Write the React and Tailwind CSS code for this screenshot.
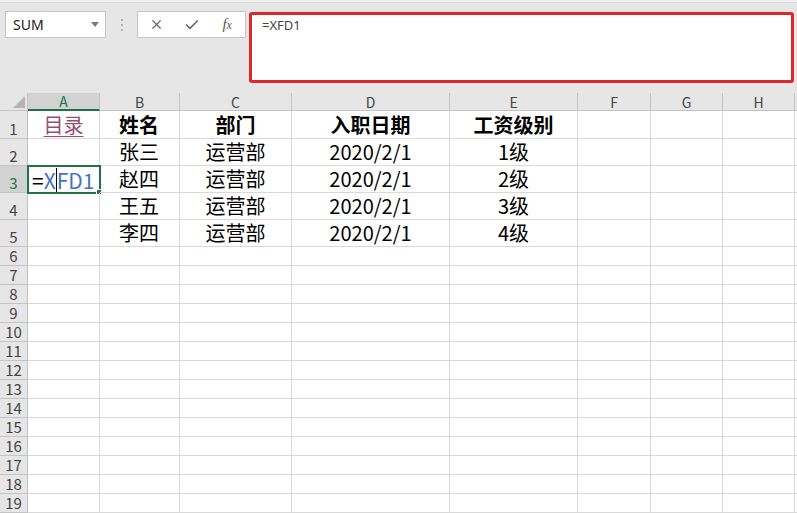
import React from "react";
import { X, Check } from "lucide-react";

const colLetters = ["A", "B", "C", "D", "E", "F", "G", "H"];

const rows = [
  { n: 1, h: "h-[28px]", cells: ["目录", "姓名", "部门", "入职日期", "工资级别"], bold: true },
  { n: 2, h: "h-[27px]", cells: ["", "张三", "运营部", "2020/2/1", "1级"] },
  { n: 3, h: "h-[27px]", cells: ["", "赵四", "运营部", "2020/2/1", "2级"] },
  { n: 4, h: "h-[27px]", cells: ["", "王五", "运营部", "2020/2/1", "3级"] },
  { n: 5, h: "h-[27px]", cells: ["", "李四", "运营部", "2020/2/1", "4级"] },
];
for (let i = 6; i <= 19; i++) rows.push({ n: i, h: "h-[19px]", cells: [] });

const gridCols =
  "grid grid-cols-[28px_72px_80px_112px_158px_128px_73px_72px_72px_1fr]";

function Cell({ row, ci }) {
  const txt = row.cells[ci] || "";
  const isA1 = row.n === 1 && ci === 0;
  const isA3 = row.n === 3 && ci === 0;
  const isB = ci === 1;
  return (
    <div
      className={`relative border-r border-b border-[#d9d9d9] flex items-end pb-[1px] ${
        isB ? "justify-start pl-[19px]" : "justify-center"
      }`}
    >
      {isA1 ? (
        <span className="text-[20px] leading-[24px] text-[#954f72] underline decoration-1 underline-offset-[3px]">
          {txt}
        </span>
      ) : txt ? (
        <span
          className={`text-[20px] leading-[24px] text-black ${
            row.bold ? "font-bold" : ""
          }`}
        >
          {txt}
        </span>
      ) : null}
      {isA3 && (
        <>
          <div className="absolute -top-[1px] -left-[1px] w-[74px] h-[29px] border-2 border-[#217346] flex items-center pl-[3px]">
            <span className="text-[21px] leading-[24px] text-black">=</span>
            <span className="text-[21px] leading-[24px] text-[#4472c4]">X</span>
            <span className="inline-block w-[1px] h-[24px] bg-black"></span>
            <span className="text-[21px] leading-[24px] text-[#4472c4]">FD1</span>
          </div>
          <div className="absolute -right-[3px] -bottom-[3px] w-[6px] h-[6px] bg-[#217346] border border-white"></div>
        </>
      )}
    </div>
  );
}

export default function App() {
  return (
    <div
      className="w-[797px] h-[513px] overflow-hidden bg-white flex flex-col"
      style={{ fontFamily: '"Noto Sans CJK SC", "Noto Sans", sans-serif' }}
    >
      {/* top formula bar area */}
      <div className="h-[93px] bg-[#e6e6e6] flex flex-col shrink-0">
        <div className="h-[3px] bg-[#f0f0f0] border-b border-[#dadada]"></div>
        <div className="flex items-start pt-[8px]">
          {/* name box */}
          <div className="ml-[5px] w-[101px] h-[27px] bg-white border border-[#c6c6c6] flex items-center justify-between pl-[7px] pr-[6px]">
            <span
              className="text-[14px] text-[#222]"
              style={{ fontFamily: '"Noto Sans", sans-serif' }}
            >
              SUM
            </span>
            <svg width="8" height="5" viewBox="0 0 8 5">
              <path d="M0 0 L8 0 L4 5 Z" fill="#7a7a7a" />
            </svg>
          </div>
          {/* dots */}
          <div className="w-[31px] h-[27px] flex flex-col items-center justify-center gap-[3px]">
            <span className="w-[2px] h-[2px] bg-[#b0b0b0]"></span>
            <span className="w-[2px] h-[2px] bg-[#b0b0b0]"></span>
            <span className="w-[2px] h-[2px] bg-[#b0b0b0]"></span>
          </div>
          {/* buttons */}
          <div className="w-[109px] h-[27px] bg-white border border-[#c6c6c6] flex items-center">
            <div className="w-[36px] flex justify-center pl-[2px]">
              <X size={15} strokeWidth={2} color="#6b6b6b" />
            </div>
            <div className="w-[36px] flex justify-center">
              <Check size={16} strokeWidth={2.5} color="#6b6b6b" />
            </div>
            <div className="w-[36px] flex justify-center">
              <span
                className="italic text-[15px] leading-none text-[#555]"
                style={{ fontFamily: '"Liberation Serif", serif' }}
              >
                f<span className="text-[12px]">x</span>
              </span>
            </div>
          </div>
          {/* formula input */}
          <div className="ml-[3px] mt-[1px] w-[545px] h-[71px] bg-white border-[3px] border-[#e0262a] rounded-[3px] pl-[10px] pt-[1px]">
            <div
              className="text-[13px] leading-[18px] text-[#444]"
              style={{ fontFamily: '"Noto Sans", sans-serif' }}
            >
              =XFD1
            </div>
          </div>
        </div>
      </div>

      {/* sheet */}
      <div className="flex-1 flex flex-col">
        {/* column header row */}
        <div className={`${gridCols} h-[18px] bg-[#e6e6e6]`}>
          <div className="relative border-r border-b border-[#c4c4c4]">
            <svg
              className="absolute right-[2px] bottom-[2px]"
              width="12"
              height="12"
              viewBox="0 0 12 12"
            >
              <path d="M12 0 L12 12 L0 12 Z" fill="#b5b5b5" />
            </svg>
          </div>
          {colLetters.map((c) => (
            <div
              key={c}
              className={`flex items-center justify-center text-[14px] leading-none border-r ${
                c === "A"
                  ? "bg-[#d2d2d2] text-[#217346] border-b-2 border-b-[#217346] border-r-[#c4c4c4]"
                  : "text-[#444] border-b border-[#c4c4c4]"
              }`}
            >
              {c}
            </div>
          ))}
          <div className="border-b border-[#c4c4c4]"></div>
        </div>

        {rows.map((row) => (
          <div key={row.n} className={`${gridCols} ${row.h}`}>
            <div
              className={`flex items-end justify-center text-[15px] leading-[18px] border-r border-b border-[#c4c4c4] ${
                row.n === 3
                  ? "bg-[#d2d2d2] text-[#217346]"
                  : "bg-[#e6e6e6] text-[#444]"
              }`}
            >
              {row.n}
            </div>
            {colLetters.map((c, ci) => (
              <Cell key={c} row={row} ci={ci} />
            ))}
            <div className="border-b border-[#d9d9d9]"></div>
          </div>
        ))}
      </div>
    </div>
  );
}
